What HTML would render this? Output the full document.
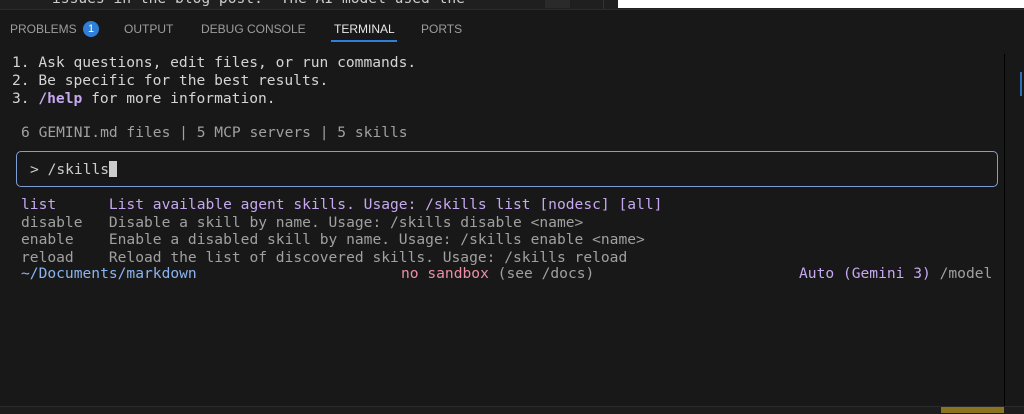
<!DOCTYPE html>
<html><head><meta charset="utf-8"><style>
body{margin:0;width:1024px;height:413px;overflow:hidden;background:#181818;position:relative;font-family:"DejaVu Sans Mono","Liberation Mono",monospace;}
.a{position:absolute;white-space:pre;}
.t{font-size:14.6px;line-height:18px;color:#d4d4d4;}
.tab{font-family:"Liberation Sans",sans-serif;font-size:12px;color:#9d9d9d;top:22px;}
.g{color:#a0a0a0}.p{color:#c6a8f0}.b{color:#8ab4f0}.r{color:#ec8fa5}
</style></head><body>
<div class="a" style="left:0;top:0;width:1024px;height:9px;background:#1f1f1f;overflow:hidden;border-bottom:1px solid #2b2b2b">
<div class="a t" style="left:52px;top:-10px;color:#ccc">issues in the blog post.  The AI model used the</div>
<div class="a" style="left:545px;top:0;width:25px;height:8px;background:#2a2a2a"></div>
<div class="a" style="left:603px;top:0;width:1px;height:9px;background:#333"></div>
<div class="a" style="left:618px;top:0;width:406px;height:8px;background:#fff"></div>
</div>
<div class="a tab" style="left:10px">PROBLEMS</div>
<div class="a" style="left:83px;top:21px;width:16px;height:16px;border-radius:8px;background:#2f7fd8;color:#fff;font:11px 'Liberation Sans',sans-serif;text-align:center;line-height:16px">1</div>
<div class="a tab" style="left:124px">OUTPUT</div>
<div class="a tab" style="left:201px">DEBUG CONSOLE</div>
<div class="a tab" style="left:334px;color:#e7e7e7">TERMINAL</div>
<div class="a" style="left:331px;top:40px;width:66px;height:2px;background:#2f7fd8"></div>
<div class="a tab" style="left:421px">PORTS</div>
<div class="a t" style="left:12px;top:54px">1. Ask questions, edit files, or run commands.
2. Be specific for the best results.
3. <b class="p">/help</b> for more information.</div>
<div class="a t g" style="left:21px;top:124px">6 GEMINI.md files | 5 MCP servers | 5 skills</div>
<div class="a" style="left:16px;top:151px;width:980px;height:34px;border:1px solid #7f9ed6;border-radius:5px"></div>
<div class="a t" style="left:30px;top:161px;color:#ccc">&gt; /skills<span style="display:inline-block;width:8px;height:16px;background:#ccc;vertical-align:-3px"></span></div>
<div class="a t" style="left:21px;top:196px;line-height:17.5px"><span class="p">list      List available agent skills. Usage: /skills list [nodesc] [all]</span>
<span class="g">disable   Disable a skill by name. Usage: /skills disable &lt;name&gt;
enable    Enable a disabled skill by name. Usage: /skills enable &lt;name&gt;
reload    Reload the list of discovered skills. Usage: /skills reload</span></div>
<div class="a t b" style="left:21px;top:265px">~/Documents/markdown</div>
<div class="a t" style="left:401px;top:265px"><span class="r">no sandbox</span><span class="g"> (see /docs)</span></div>
<div class="a t" style="left:799px;top:265px"><span class="p">Auto (Gemini 3)</span><span class="g"> /model</span></div>
<div class="a" style="left:1004px;top:54px;width:1px;height:352px;background:#000"></div>
<div class="a" style="left:1020px;top:72px;width:2px;height:24px;background:#2f6fb8"></div>
<div class="a" style="left:0;top:406px;width:1024px;height:7px;background:#1c1c1c;border-top:1px solid #2a2a2a"></div>
<div class="a" style="left:941px;top:407px;width:63px;height:6px;background:#8a7420"></div>
</body></html>
